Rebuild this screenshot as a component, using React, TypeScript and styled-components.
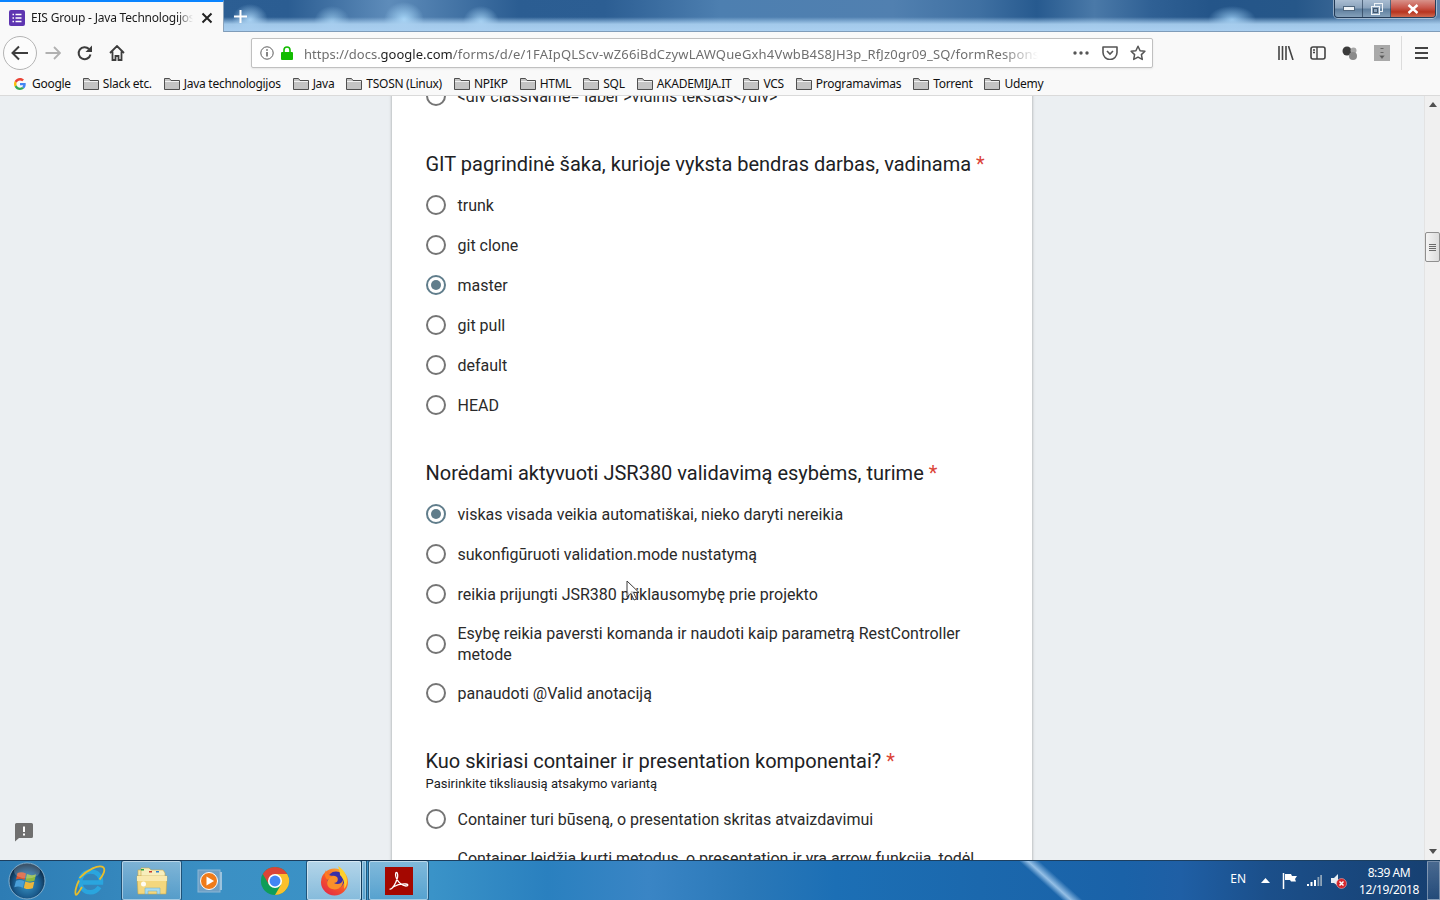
import React from "react";
import styled, { createGlobalStyle } from "styled-components";

const GlobalStyle = createGlobalStyle`
  html, body {
    margin: 0;
    padding: 0;
    height: 100%;
    overflow: hidden;
    background: #ebeff2;
  }
  * {
    box-sizing: border-box;
  }
`;

const Screen = styled.div`
  width: 1440px;
  height: 900px;
  display: flex;
  flex-direction: column;
  font-family: "Noto Sans", "Open Sans", sans-serif;
  overflow: hidden;
`;

const TitleBar = styled.div`
  height: 32px;
  flex: none;
  display: flex;
  align-items: flex-start;
  background:
    linear-gradient(180deg, rgba(170, 208, 240, 0) 55%, rgba(170, 208, 240, 0.92) 78%, #aacff0 100%),
    radial-gradient(ellipse 18px 16px at 250px 20px, #a6d2f4 0%, rgba(166, 210, 244, 0) 100%),
    radial-gradient(ellipse 18px 16px at 332px 22px, #8fbfe4 0%, rgba(143, 191, 228, 0) 100%),
    radial-gradient(ellipse 20px 18px at 404px 20px, #a6d6f8 0%, rgba(166, 214, 248, 0) 100%),
    radial-gradient(ellipse 18px 16px at 481px 22px, #a0cff2 0%, rgba(160, 207, 242, 0) 100%),
    radial-gradient(ellipse 24px 14px at 1232px 20px, #90c2ea 0%, rgba(144, 194, 234, 0) 100%),
    linear-gradient(90deg, #2f6196 0%, #2b5d92 20%, #5e8cba 27%, #2b5d92 36%, #2c5e93 42%, #4d7fb0 50%, #5180b0 62%, #3f70a2 68%, #275a8f 72%, #4a79a8 76%, #2f6094 80%, #245589 84%, #265789 90%, #5f85ad 100%);
  border-bottom: 1px solid #7f9cb9;
`;

const Tab = styled.div`
  width: 224px;
  height: 32px;
  flex: none;
  display: flex;
  align-items: center;
  padding: 1px 10px 0 9px;
  background: #f9f9f9;
  border-top: 2px solid #0a84ff;
  border-right: 1px solid #8ba3bb;
`;

const TabTitle = styled.span`
  width: 162px;
  flex: none;
  margin-left: 6px;
  margin-right: auto;
  font-size: 12px;
  letter-spacing: -0.2px;
  color: #1b1b1b;
  white-space: nowrap;
  overflow: hidden;
  -webkit-mask-image: linear-gradient(90deg, #000 90%, transparent 100%);
  mask-image: linear-gradient(90deg, #000 90%, transparent 100%);
`;

const NewTab = styled.div`
  width: 32px;
  height: 32px;
  flex: none;
  display: flex;
  align-items: center;
  justify-content: center;
`;

const DragSpace = styled.div`
  flex: 1;
`;

const WindowControls = styled.div`
  width: 102px;
  height: 18px;
  margin-right: 4px;
  flex: none;
  display: flex;
  border: 1px solid rgba(30, 50, 75, 0.85);
  border-top: none;
  border-radius: 0 0 4px 4px;
  overflow: hidden;
  box-shadow: 0 0 0 1px rgba(255, 255, 255, 0.45);
`;

const WinButton = styled.div<{ $wide?: boolean; $danger?: boolean }>`
  width: ${(p) => (p.$wide ? "46px" : "28px")};
  flex: ${(p) => (p.$wide ? "1" : "none")};
  display: flex;
  align-items: center;
  justify-content: center;
  border-right: ${(p) => (p.$danger ? "none" : "1px solid rgba(30, 50, 75, 0.6)")};
  background: ${(p) =>
    p.$danger
      ? "linear-gradient(180deg, #d8928a 0%, #c9584c 45%, #b8341f 70%, #cf6a50 100%)"
      : "linear-gradient(180deg, #a9bdd2 0%, #8ca4bd 45%, #5f7f9e 55%, #84a0ba 100%)"};
`;

const NavBar = styled.div`
  height: 42px;
  flex: none;
  display: flex;
  align-items: center;
  padding-left: 3px;
  background: #f9f9f9;
`;

const BackCircle = styled.div`
  width: 34px;
  height: 34px;
  flex: none;
  border-radius: 50%;
  border: 1px solid #b4b4b4;
  background: #fcfcfc;
  display: flex;
  align-items: center;
  justify-content: center;
`;

const NavIcon = styled.div<{ $w: number }>`
  width: ${(p) => p.$w}px;
  flex: none;
  display: flex;
  align-items: center;
  justify-content: center;
`;

const UrlBar = styled.div`
  width: 902px;
  height: 30px;
  flex: none;
  margin-left: 118px;
  display: flex;
  align-items: center;
  background: #fff;
  border: 1px solid #c0c0c0;
  border-radius: 2px;
  box-shadow: 0 1px 2px rgba(0, 0, 0, 0.08);
  padding-left: 8px;
`;

const LockIcon = styled.svg`
  margin-left: 7px;
  flex: none;
`;

const UrlText = styled.div`
  width: 734px;
  flex: none;
  margin-left: 11px;
  padding-top: 1px;
  font-size: 13px;
  color: #6f6f6f;
  white-space: nowrap;
  overflow: hidden;
  -webkit-mask-image: linear-gradient(90deg, #000 95%, transparent 100%);
  mask-image: linear-gradient(90deg, #000 95%, transparent 100%);

  b {
    font-weight: 400;
    color: #1e1e1e;
  }

  span {
    letter-spacing: 0.18px;
  }
`;

const UrlActions = styled.div`
  display: flex;
  align-items: center;
  margin-left: 35px;
  gap: 12.5px;
`;

const ToolGroup = styled.div`
  display: flex;
  align-items: center;
  margin-left: 125px;
  gap: 16px;
`;

const Separator = styled.div`
  width: 1px;
  height: 34px;
  background: #dcdcdc;
  margin: 0 13px 0 11px;
`;

const Bookmarks = styled.div`
  height: 22px;
  flex: none;
  display: flex;
  align-items: center;
  gap: 12px;
  padding: 0 0 2px 14px;
  background: #f9f9f9;
  border-bottom: 1px solid #dadada;
`;

const Bookmark = styled.div<{ $gap?: number }>`
  display: flex;
  align-items: center;
  gap: ${(p) => p.$gap ?? 4}px;
  font-size: 12px;
  letter-spacing: -0.28px;
  color: #111;
  white-space: nowrap;
`;

const Main = styled.div`
  position: relative;
  flex: 1;
  min-height: 0;
  display: flex;
  overflow: hidden;
  background: #ebeff2;
`;

const Page = styled.div`
  flex: 1;
  display: flex;
  justify-content: center;
  overflow: hidden;
`;

const Card = styled.div`
  width: 640px;
  height: 800px;
  margin-top: -29px;
  padding: 0 34px;
  background: #fff;
  box-shadow: 0 0 3px rgba(0, 0, 0, 0.35);
  font-family: Roboto, "Noto Sans", sans-serif;
  color: #212121;
`;

const Question = styled.section`
  margin-top: 36px;
`;

const QuestionTitle = styled.h2`
  margin: 0 0 0 -0.5px;
  font-size: 20px;
  font-weight: 400;
  line-height: 24px;
  color: #202124;

  span {
    color: #db4437;
  }
`;

const Hint = styled.div`
  font-size: 13px;
  line-height: 18px;
  margin: 2px 0 0 -0.5px;
  color: #202124;
`;

const Options = styled.div<{ $tight?: boolean }>`
  margin-top: ${(p) => (p.$tight ? "6px" : "9px")};
`;

const Option = styled.div<{ $double?: boolean; $long?: boolean }>`
  display: flex;
  align-items: ${(p) => (p.$long ? "flex-start" : "center")};
  gap: 12px;
  min-height: 40px;
  padding: ${(p) => (p.$long || p.$double ? "9px 0 8px" : "0")};
`;

const Radio = styled.div<{ $checked?: boolean; $low?: boolean }>`
  position: relative;
  width: 20px;
  height: 20px;
  flex: none;
  margin-top: ${(p) => (p.$low ? "21px" : "0")};
  border-radius: 50%;
  border: 2px solid ${(p) => (p.$checked ? "#607d8b" : "#757575")};

  &::after {
    content: "";
    display: ${(p) => (p.$checked ? "block" : "none")};
    position: absolute;
    left: 3px;
    top: 3px;
    width: 10px;
    height: 10px;
    border-radius: 50%;
    background: #607d8b;
  }
`;

const OptionText = styled.div`
  font-size: 16px;
  line-height: 21px;
  margin-left: -0.5px;
  color: #2a2a2a;
`;

const Scrollbar = styled.div`
  width: 16px;
  flex: none;
  display: flex;
  flex-direction: column;
  background: #f0f0f0;
  border-left: 1px solid #e3e3e3;
`;

const ScrollArrow = styled.div`
  height: 17px;
  flex: none;
  display: flex;
  align-items: center;
  justify-content: center;
`;

const ScrollTrack = styled.div`
  flex: 1;
  padding-top: 119px;
`;

const ScrollThumb = styled.div`
  height: 30px;
  display: flex;
  flex-direction: column;
  align-items: center;
  justify-content: center;
  gap: 1px;
  background: linear-gradient(90deg, #f4f4f4, #dcdcdc);
  border: 1px solid #8f8f8f;
  border-radius: 2px;

  i {
    display: block;
    width: 7px;
    height: 1px;
    background: #6a6a6a;
  }
`;

const Feedback = styled.div`
  position: absolute;
  left: 14px;
  top: 726px;
`;

const Cursor = styled.div`
  position: absolute;
  left: 626px;
  top: 484px;
  line-height: 0;
`;

const Taskbar = styled.div`
  height: 40px;
  flex: none;
  display: flex;
  align-items: center;
  border-top: 1px solid #1d3f5f;
  background:
    linear-gradient(42deg, rgba(190, 222, 250, 0) 71.6%, rgba(190, 222, 250, 0.75) 72.2%, rgba(190, 222, 250, 0) 73%),
    linear-gradient(90deg, #2d7cb4 0%, #3b90c4 15%, #3a93c8 30%, #2a80bf 38%, #3a85c5 45%, #2a78b8 52%, #1c6fb5 58%, #1b68ad 68%, #1a62a8 78%, #1f5fa5 82%, #1b4f8a 88%, #163f70 100%);
`;

const Orb = styled.div`
  width: 54px;
  height: 39px;
  flex: none;
  display: flex;
  align-items: center;
  justify-content: center;
`;

const TaskItem = styled.div<{ $w: number; $pad?: number; $active?: boolean; $bright?: boolean }>`
  width: ${(p) => p.$w}px;
  height: 39px;
  flex: none;
  display: flex;
  align-items: center;
  justify-content: center;
  padding-left: ${(p) => p.$pad ?? 0}px;
  border-radius: 2px;
  background: ${(p) =>
    p.$bright
      ? "linear-gradient(180deg, rgba(255,255,255,.62), rgba(255,255,255,.38))"
      : p.$active
        ? "linear-gradient(180deg, rgba(255,255,255,.36), rgba(255,255,255,.14))"
        : "transparent"};
  box-shadow: ${(p) =>
    p.$active || p.$bright
      ? "inset 0 0 0 1px rgba(255,255,255,.45), 0 0 0 1px rgba(10,35,60,.55)"
      : "none"};
`;

const TaskGap = styled.div<{ $w: number }>`
  width: ${(p) => p.$w}px;
  height: 39px;
  flex: none;
`;

const Stack = styled(TaskGap)`
  background: linear-gradient(180deg, rgba(255, 255, 255, 0.32), rgba(255, 255, 255, 0.14));
  box-shadow: inset 0 0 0 1px rgba(255, 255, 255, 0.35), 0 0 0 1px rgba(10, 35, 60, 0.5);
`;

const Tray = styled.div`
  margin-left: auto;
  display: flex;
  align-items: center;
  height: 39px;
  color: #fff;
`;

const TrayLabel = styled.span`
  font-size: 12px;
  margin-right: 15px;
  margin-top: -4px;
`;

const TrayIcons = styled.div`
  display: flex;
  align-items: center;
  gap: 8px;
`;

const Caret = styled.svg`
  margin-right: 4px;
`;

const SpeakerIcon = styled.svg`
  margin-left: 1px;
`;

const Clock = styled.div`
  width: 70px;
  margin-left: 7px;
  margin-top: 1px;
  text-align: center;
  font-size: 12px;
  line-height: 17px;
  letter-spacing: -0.4px;
`;

const ShowDesktop = styled.div`
  width: 13px;
  height: 39px;
  margin-left: 3px;
  border: 1px solid rgba(255, 255, 255, 0.35);
  background: linear-gradient(180deg, rgba(255, 255, 255, 0.22), rgba(255, 255, 255, 0.06));
`;

const questions = [
  {
    title: "GIT pagrindinė šaka, kurioje vyksta bendras darbas, vadinama",
    options: ["trunk", "git clone", "master", "git pull", "default", "HEAD"],
    checked: 2,
  },
  {
    title: "Norėdami aktyvuoti JSR380 validavimą esybėms, turime",
    options: [
      "viskas visada veikia automatiškai, nieko daryti nereikia",
      "sukonfigūruoti validation.mode nustatymą",
      "reikia prijungti JSR380 priklausomybę prie projekto",
      "Esybę reikia paversti komanda ir naudoti kaip parametrą RestController metode",
      "panaudoti @Valid anotaciją",
    ],
    checked: 0,
    double: 3,
  },
  {
    title: "Kuo skiriasi container ir presentation komponentai?",
    hint: "Pasirinkite tiksliausią atsakymo variantą",
    options: [
      "Container turi būseną, o presentation skritas atvaizdavimui",
      "Container leidžia kurti metodus, o presentation ir yra arrow funkcija, todėl",
    ],
    checked: -1,
    long: 1,
  },
];

const bookmarks = [
  "Slack etc.",
  "Java technologijos",
  "Java",
  "TSOSN (Linux)",
  "NPIKP",
  "HTML",
  "SQL",
  "AKADEMIJA.IT",
  "VCS",
  "Programavimas",
  "Torrent",
  "Udemy",
];

const FolderIcon = () => (
  <svg width="16" height="14" viewBox="0 0 16 14">
    <path d="M.5 12.5V1.500h5l1.500 2h8.500v9z" fill="#c4c4c4" stroke="#4f4f4f" />
    <path d="M1 4.500h14" stroke="#f2f2f2" />
  </svg>
);

const GoogleIcon = () => (
  <svg width="12" height="12" viewBox="0 0 48 48">
    <path fill="#EA4335" d="M24 9.500c3.500 0 6.700 1.300 9.100 3.500l6.800-6.800C35.900 2.400 30.300 0 24 0 14.600 0 6.500 5.400 2.600 13.200l7.900 6.100C12.400 13.700 17.700 9.500 24 9.500z" />
    <path fill="#4285F4" d="M46.900 24.500c0-1.600-.1-3.100-.4-4.500H24v9h12.900c-.6 3-2.200 5.500-4.700 7.200l7.700 6c4.500-4.200 7-10.300 7-17.700z" />
    <path fill="#FBBC05" d="M10.500 28.700c-.5-1.500-.8-3-.8-4.700s.3-3.200.8-4.700l-7.900-6.100C.9 16.500 0 20.100 0 24s.9 7.500 2.600 10.800z" />
    <path fill="#34A853" d="M24 48c6.500 0 11.900-2.100 15.900-5.800l-7.700-6c-2.200 1.400-4.900 2.300-8.200 2.300-6.300 0-11.600-4.200-13.500-9.900l-7.900 6.100C6.500 42.600 14.600 48 24 48z" />
  </svg>
);

const FormsIcon = () => (
  <svg width="16" height="16" viewBox="0 0 16 16">
    <rect width="16" height="16" rx="2" fill="#5e35b1" />
    <path d="M3.500 4.500h1.500M6.500 4.500h6M3.500 8h1.500M6.500 8h6M3.500 11.500h1.500M6.500 11.500h6" stroke="#fff" strokeWidth="1.500" />
  </svg>
);

const WindowsOrb = () => (
  <svg width="38" height="38" viewBox="0 0 38 38">
    <defs>
      <radialGradient id="orb" cx="50%" cy="60%" r="55%">
        <stop offset="0%" stopColor="#3a95c6" />
        <stop offset="65%" stopColor="#1a5a8c" />
        <stop offset="100%" stopColor="#0c2a46" />
      </radialGradient>
    </defs>
    <circle cx="19" cy="19" r="18" fill="url(#orb)" stroke="#9cc3dc" strokeWidth=".8" />
    <path d="M9.500 11c3-1.300 5.500-1 8.500.5l-1.500 6.500c-3-1.400-5.500-1.600-8.500-.5z" fill="#d8552f" />
    <path d="M19 12c3 1.400 5.500 1.600 9 .3l-1.500 6.500c-3.300 1.200-6 1-9-.4z" fill="#8ab83f" />
    <path d="M8 18.700c3-1.100 5.500-.9 8.300.5l-1.500 6.500c-3-1.400-5.500-1.600-8.500-.5z" fill="#4a9fd8" />
    <path d="M17.300 19.500c3 1.400 5.700 1.500 9 .3l-1.500 6.500c-3.300 1.200-6 1-9-.4z" fill="#eeb63a" />
    <ellipse cx="19" cy="9" rx="13" ry="7.500" fill="#fff" opacity=".2" />
  </svg>
);

const IEIcon = () => (
  <svg width="32" height="32" viewBox="0 0 32 32">
    <path d="M6 17.500C6.500 10.500 11 6.500 16.500 6.500 23 6.500 27.500 11 27 17.500H8.500M25.500 22C23 25.800 20 27.300 16.500 27.300 10.500 27.300 6.800 23 6.500 17.500" fill="none" stroke="#2aa5de" strokeWidth="4.500" />
    <path d="M5.500 13C13 5 25 -1 29.500 2.500 32 5.500 28 12 25.500 14.500M8 22C5.500 26 3 30.500 2 29.800 .5 28 2 21 5 15.500" fill="none" stroke="#e8bd2c" strokeWidth="1.800" />
  </svg>
);

const ExplorerIcon = () => (
  <svg width="32" height="28" viewBox="0 0 32 28">
    <path d="M2 3h11l2 2h9v4H2z" fill="#f5e7a8" stroke="#c9a94a" strokeWidth=".6" />
    <path d="M5 1h8l2 2h12l2 3v4H5z" fill="#f7eebc" stroke="#c9a94a" strokeWidth=".6" />
    <rect x="5" y="2" width="3" height="1.500" fill="#2ea53a" />
    <rect x="13" y="4" width="3" height="1.500" fill="#c8392a" />
    <rect x="20" y="4" width="3" height="1.500" fill="#2e80d0" />
    <path d="M1 9h30l-1 18H2z" fill="#f3d77e" stroke="#c9a94a" strokeWidth=".6" />
    <path d="M1 9h30v5H1z" fill="#f9e9ae" />
    <path d="M9 27v-6h15v6h-3v-3h-9v3z" fill="#a9dbf0" stroke="#6ba9c7" strokeWidth=".5" />
    <circle cx="7.500" cy="17" r="2.500" fill="#fff" opacity=".9" />
  </svg>
);

const MediaIcon = () => (
  <svg width="28" height="26" viewBox="0 0 28 26">
    <rect x="1" y="2" width="22" height="22" fill="#6f9fc4" stroke="#8db7d6" />
    <rect x="23" y="4" width="2" height="18" fill="#9cc3dd" />
    <circle cx="12" cy="13" r="8.500" fill="#ef7b1a" stroke="#fff" strokeWidth="1" />
    <path d="M9.500 8.500v9l7.500-4.500z" fill="#fff" />
  </svg>
);

const ChromeIcon = () => (
  <svg width="30" height="30" viewBox="0 0 32 32">
    <circle cx="16" cy="16" r="15" fill="#0f9d58" />
    <path d="M29 8.500A15 15 0 0 1 16 31l6.500-11.250L16 8.500z" fill="#fbc02d" />
    <path d="M3 8.500a15 15 0 0 1 26 0H16L9.500 19.750z" fill="#db4437" />
    <circle cx="16" cy="16" r="7.500" fill="#fff" />
    <circle cx="16" cy="16" r="5.800" fill="#4285f4" />
  </svg>
);

const FirefoxIcon = () => (
  <svg width="32" height="32" viewBox="0 0 32 32">
    <defs>
      <linearGradient id="fx" x1="0.800" y1="0" x2="0.100" y2="1">
        <stop offset="0%" stopColor="#ffae2a" />
        <stop offset="55%" stopColor="#f4512c" />
        <stop offset="100%" stopColor="#e0244a" />
      </linearGradient>
    </defs>
    <circle cx="15.500" cy="17" r="13.500" fill="url(#fx)" />
    <circle cx="17" cy="15" r="8.500" fill="#3a2fa8" />
    <path d="M9 15c2-5 6-5 9-3 2 3 0 6-3 6 3 2 8 1 9-3 1 6-5 11-11 9-4-1-6-5-4-9z" fill="#f9902a" />
    <path d="M19 1c5 3 9 8 9 15 0 3-1 6-3 8 1-5 0-10-4-14 0-3-1-6-2-9z" fill="#ffd02d" />
    <path d="M7 5c0 3 3 6 7 6-2 1-4 2-5 4-3-2-4-6-2-10z" fill="#ff7a1f" />
  </svg>
);

const AcrobatIcon = () => (
  <svg width="28" height="28" viewBox="0 0 28 28">
    <rect width="28" height="28" fill="#b30b00" />
    <rect width="28" height="28" fill="#8a0000" opacity=".35" />
    <path d="M4.500 22c3 1 6.500-6 8-11.500.5-2.500 0-5-1-5s-1.500 3 0 6c2 4 6 7 9.500 7.500 2.500 0 2.500-1.800 0-2-3.500-.3-9 .7-13 3" fill="none" stroke="#fff" strokeWidth="1.300" />
  </svg>
);

const App: React.FC = () => {
  return (
    <Screen>
      <GlobalStyle />
      <TitleBar>
        <Tab>
          <FormsIcon />
          <TabTitle>EIS Group - Java Technologijos</TabTitle>
          <svg width="12" height="12" viewBox="0 0 12 12">
            <path d="M1.500 1.500l9 9M10.500 1.500l-9 9" stroke="#222" strokeWidth="2" />
          </svg>
        </Tab>
        <NewTab>
          <svg width="15" height="15" viewBox="0 0 15 15">
            <path d="M7.500 1v13M1 7.500h13" stroke="#fff" strokeWidth="2" />
          </svg>
        </NewTab>
        <DragSpace />
        <WindowControls>
          <WinButton>
            <svg width="12" height="6" viewBox="0 0 12 6">
              <rect x=".5" y=".5" width="11" height="4" fill="#eef3f7" stroke="#50677e" />
            </svg>
          </WinButton>
          <WinButton>
            <svg width="12" height="12" viewBox="0 0 12 12">
              <rect x="3.500" y=".5" width="8" height="8" fill="none" stroke="#eef3f7" />
              <rect x=".5" y="3.500" width="8" height="8" fill="#8ca4bd" stroke="#eef3f7" />
              <rect x="2.500" y="5.500" width="4" height="4" fill="none" stroke="#40566c" />
            </svg>
          </WinButton>
          <WinButton $wide $danger>
            <svg width="12" height="10" viewBox="0 0 12 10">
              <path d="M1.500 1l9 8M10.500 1l-9 8" stroke="#fff" strokeWidth="2.400" />
            </svg>
          </WinButton>
        </WindowControls>
      </TitleBar>

      <NavBar>
        <BackCircle>
          <svg width="18" height="16" viewBox="0 0 18 16">
            <path d="M8 1.500L1.500 8 8 14.500M2 8h15" fill="none" stroke="#3d3d3d" strokeWidth="2" />
          </svg>
        </BackCircle>
        <NavIcon $w={32}>
          <svg width="16" height="14" viewBox="0 0 16 14">
            <path d="M9 1l6 6-6 6M14.500 7H.5" fill="none" stroke="#b1b1b1" strokeWidth="1.800" />
          </svg>
        </NavIcon>
        <NavIcon $w={32}>
          <svg width="16" height="16" viewBox="0 0 16 16">
            <path d="M13.500 9.500A6 6 0 1 1 12 4" fill="none" stroke="#3d3d3d" strokeWidth="2" />
            <path d="M15 .5V7H8.500z" fill="#3d3d3d" />
          </svg>
        </NavIcon>
        <NavIcon $w={32}>
          <svg width="16" height="16" viewBox="0 0 16 16">
            <path d="M1 8l7-7 7 7M3.500 6.500V15h3v-4h3v4h3V6.500" fill="none" stroke="#3d3d3d" strokeWidth="1.800" />
          </svg>
        </NavIcon>
        <UrlBar>
          <svg width="14" height="14" viewBox="0 0 14 14">
            <circle cx="7" cy="7" r="6.200" fill="none" stroke="#5c5c5c" />
            <path d="M7 6v4.500M7 3.200v1.600" stroke="#5c5c5c" strokeWidth="1.500" />
          </svg>
          <LockIcon width="12" height="14" viewBox="0 0 12 14">
            <path d="M3 6V4a3 3 0 0 1 6 0v2" fill="none" stroke="#12bc00" strokeWidth="1.600" />
            <rect y="6" width="12" height="8" rx="1" fill="#12bc00" />
          </LockIcon>
          <UrlText>
            https://docs.<b>google.com</b>
            <span>/forms/d/e/1FAIpQLScv-wZ66iBdCzywLAWQueGxh4VwbB4S8JH3p_RfJz0gr09_SQ/formResponse</span>
          </UrlText>
          <UrlActions>
            <svg width="16" height="4" viewBox="0 0 16 4">
              <circle cx="2" cy="2" r="1.700" fill="#555" />
              <circle cx="8" cy="2" r="1.700" fill="#555" />
              <circle cx="14" cy="2" r="1.700" fill="#555" />
            </svg>
            <svg width="16" height="14" viewBox="0 0 16 14">
              <path d="M1 1h14v5.500a7 7 0 0 1-14 0z" fill="none" stroke="#555" strokeWidth="1.600" strokeLinejoin="round" />
              <path d="M5 5l3 3 3-3" fill="none" stroke="#555" strokeWidth="1.600" />
            </svg>
            <svg width="16" height="16" viewBox="0 0 16 16">
              <path d="M8 1.300l2.100 4.400 4.800.6-3.500 3.300.9 4.800L8 12.100l-4.300 2.300.9-4.800L1.100 6.300l4.800-.6z" fill="none" stroke="#555" strokeWidth="1.500" strokeLinejoin="round" />
            </svg>
          </UrlActions>
        </UrlBar>
        <ToolGroup>
          <svg width="16" height="14" viewBox="0 0 16 14">
            <path d="M1 0v14M4.500 0v14M8 0v14M10.500 0l4.500 14" stroke="#444" strokeWidth="1.600" />
          </svg>
          <svg width="16" height="14" viewBox="0 0 16 14">
            <rect x="1" y="1" width="14" height="12" rx="2" fill="none" stroke="#444" strokeWidth="1.600" />
            <path d="M7 1v12M3 4h2M3 6.500h2" stroke="#444" strokeWidth="1.400" />
          </svg>
          <svg width="16" height="14" viewBox="0 0 16 14">
            <circle cx="5" cy="5" r="4.500" fill="#3b3b3b" />
            <circle cx="11.500" cy="4.500" r="3" fill="#a5a5a5" />
            <circle cx="11" cy="10" r="4" fill="#8a8a8a" />
          </svg>
          <svg width="16" height="16" viewBox="0 0 16 16">
            <rect width="16" height="16" fill="#a9a9a9" />
            <path d="M6.500 3.500h3M6.500 7.500h3M6.500 11h3l-1.500 2z" stroke="#666" strokeWidth="1.200" />
          </svg>
        </ToolGroup>
        <Separator />
        <svg width="13" height="12" viewBox="0 0 13 12">
          <path d="M0 1h13M0 6h13M0 11h13" stroke="#444" strokeWidth="2" />
        </svg>
      </NavBar>

      <Bookmarks>
        <Bookmark $gap={6}>
          <GoogleIcon />
          Google
        </Bookmark>
        {bookmarks.map((name) => (
          <Bookmark key={name}>
            <FolderIcon />
            {name}
          </Bookmark>
        ))}
      </Bookmarks>

      <Main>
        <Page>
          <Card>
            <Options>
              <Option>
                <Radio />
                <OptionText>{'<div className="label">vidinis tekstas</div>'}</OptionText>
              </Option>
            </Options>
            {questions.map((q) => (
              <Question key={q.title}>
                <QuestionTitle>
                  {q.title} <span>*</span>
                </QuestionTitle>
                {q.hint && <Hint>{q.hint}</Hint>}
                <Options $tight={!!q.hint}>
                  {q.options.map((text, i) => (
                    <Option key={text} $double={q.double === i} $long={q.long === i}>
                      <Radio $checked={q.checked === i} $low={q.long === i} />
                      <OptionText>{text}</OptionText>
                    </Option>
                  ))}
                </Options>
              </Question>
            ))}
          </Card>
        </Page>
        <Scrollbar>
          <ScrollArrow>
            <svg width="8" height="5" viewBox="0 0 8 5">
              <path d="M4 0l4 5H0z" fill="#505050" />
            </svg>
          </ScrollArrow>
          <ScrollTrack>
            <ScrollThumb>
              <i />
              <i />
              <i />
              <i />
            </ScrollThumb>
          </ScrollTrack>
          <ScrollArrow>
            <svg width="8" height="5" viewBox="0 0 8 5">
              <path d="M4 5L0 0h8z" fill="#505050" />
            </svg>
          </ScrollArrow>
        </Scrollbar>
        <Feedback>
          <svg width="20" height="20" viewBox="0 0 20 20">
            <path d="M1 2.500A1.500 1.500 0 0 1 2.500 1h15A1.500 1.500 0 0 1 19 2.500v12a1.500 1.500 0 0 1-1.500 1.500H5l-4 3.500z" fill="#6f6f6f" />
            <path d="M10 4.500v5.500M10 11.500v2" stroke="#fff" strokeWidth="2" />
          </svg>
        </Feedback>
        <Cursor>
          <svg width="14" height="22" viewBox="0 0 14 22">
            <path d="M1 1v16l4-3.500 3 6.500 2.500-1-3-6.500H13z" fill="#fff" fillOpacity=".75" stroke="#3c3c3c" />
          </svg>
        </Cursor>
      </Main>

      <Taskbar>
        <Orb>
          <WindowsOrb />
        </Orb>
        <TaskItem $w={68} $pad={4}>
          <IEIcon />
        </TaskItem>
        <TaskItem $w={59} $active>
          <ExplorerIcon />
        </TaskItem>
        <TaskItem $w={59}>
          <MediaIcon />
        </TaskItem>
        <TaskItem $w={67} $pad={2}>
          <ChromeIcon />
        </TaskItem>
        <TaskItem $w={54} $pad={2} $bright>
          <FirefoxIcon />
        </TaskItem>
        <TaskGap $w={1} />
        <Stack $w={4} />
        <TaskGap $w={3} />
        <TaskItem $w={59} $active>
          <AcrobatIcon />
        </TaskItem>
        <Tray>
          <TrayLabel>EN</TrayLabel>
          <TrayIcons>
            <Caret width="9" height="5" viewBox="0 0 9 5">
              <path d="M4.500 0L9 5H0z" fill="#fff" />
            </Caret>
            <svg width="16" height="16" viewBox="0 0 16 16">
              <path d="M1.500 0v16" stroke="#fff" strokeWidth="1.500" />
              <path d="M3 1h6l1 2h5l-2 3 1 2.500H9L8 7H3z" fill="#fff" />
            </svg>
            <svg width="16" height="13" viewBox="0 0 16 13">
              <path d="M1 10h2v2H1zM4.500 8h2v4h-2zM8 6h2v6H8z" fill="#fff" />
              <path d="M11.500 3h1.800v9h-1.800zM14.200 1H16v11h-1.800z" fill="#8ea4b8" />
            </svg>
            <SpeakerIcon width="16" height="16" viewBox="0 0 16 16">
              <path d="M0 5h3l4-4v12L3 10H0z" fill="#e8eef3" />
              <circle cx="10.500" cy="10.500" r="5" fill="#d4262c" stroke="#f4c2c2" strokeWidth=".5" />
              <path d="M8.500 8.500l4 4M12.500 8.500l-4 4" stroke="#fff" strokeWidth="1.500" />
            </SpeakerIcon>
          </TrayIcons>
          <Clock>
            8:39 AM
            <br />
            12/19/2018
          </Clock>
          <ShowDesktop />
        </Tray>
      </Taskbar>
    </Screen>
  );
};

export default App;
